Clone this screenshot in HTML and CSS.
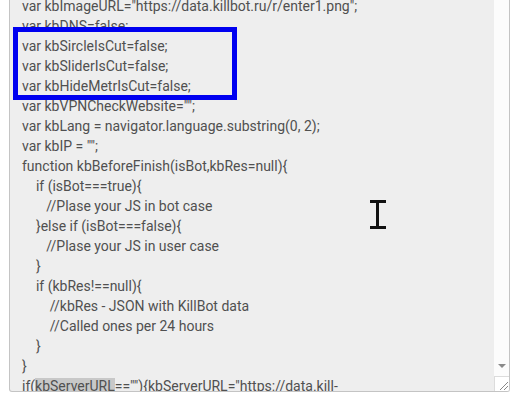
FILE: index.html
```html
<!DOCTYPE html>
<html>
<head>
<meta charset="utf-8">
<link rel="stylesheet" href="styles.css">
</head>
<body>
<div class="page">
  <div class="editor">
    <div class="code">
      <div class="lines">
        <div class="ln">var kbImageURL="https://data.killbot.ru/r/enter1.png";</div>
        <div class="ln">var kbDNS=false;</div>
        <div class="ln">var kbSircleIsCut=false;</div>
        <div class="ln">var kbSliderIsCut=false;</div>
        <div class="ln">var kbHideMetrIsCut=false;</div>
        <div class="ln">var kbVPNCheckWebsite="";</div>
        <div class="ln">var kbLang = navigator.language.substring(0, 2);</div>
        <div class="ln">var kbIP = "";</div>
        <div class="ln">function kbBeforeFinish(isBot,kbRes=null){</div>
        <div class="ln">    if (isBot===true){</div>
        <div class="ln">       //Plase your JS in bot case</div>
        <div class="ln">    }else if (isBot===false){</div>
        <div class="ln">       //Plase your JS in user case</div>
        <div class="ln">    }</div>
        <div class="ln">    if (kbRes!==null){</div>
        <div class="ln">        //kbRes - JSON with KillBot data</div>
        <div class="ln">        //Called ones per 24 hours</div>
        <div class="ln">    }</div>
        <div class="ln">}</div>
        <div class="ln">if(<span class="sel">kbServerURL</span>==""){kbServerURL="https://data.kill-</div>
        <div class="ln">bot.ru/";}</div>
      </div>
    </div>
    <div class="scrollbar">
      <div class="track"></div>
      <div class="arrow"><span class="tri"></span></div>
      <div class="resizer">
        <svg width="14" height="14" viewBox="0 0 14 14"><path d="M13 5 L5 13 M13 9 L9 13" stroke="#888" stroke-width="1" fill="none"/></svg>
      </div>
    </div>
  </div>
  <div class="highlight"></div>
  <svg class="ibeam" width="16" height="29" viewBox="0 0 16 29">
    <rect x="0" y="0" width="16" height="3" fill="#111"/>
    <rect x="6" y="2" width="3" height="25" fill="#111"/>
    <rect x="0" y="26" width="16" height="3" fill="#111"/>
  </svg>
</div>
</body>
</html>
```

FILE: styles.css
```css
html, body {
  margin: 0;
  padding: 0;
  background: #ffffff;
}

.page {
  position: relative;
  height: 401px;
  overflow: hidden;
  padding-left: 9px;
}

.editor {
  display: flex;
  width: 499px;
  height: 391px;
  box-sizing: content-box;
  border: 1px solid #c4c4c4;
  border-top: none;
  border-radius: 0 0 3px 3px;
  background: #eeeeee;
  overflow: hidden;
}

.code {
  flex: 1;
  overflow: hidden;
  padding-left: 12px;
  font-family: Roboto, "Liberation Sans", sans-serif;
  font-size: 14px;
  line-height: 20px;
  color: #505050;
}

.lines {
  margin-top: -4px;
}

.ln {
  white-space: pre;
  height: 20px;
}

.sel {
  background: #c8c8c8;
}

.scrollbar {
  width: 15px;
  display: flex;
  flex-direction: column;
  background: #fcfcfc;
}

.track {
  flex: 1;
}

.arrow {
  height: 17px;
  display: flex;
  align-items: center;
  justify-content: center;
}

.tri {
  width: 0;
  height: 0;
  border-left: 4px solid transparent;
  border-right: 4px solid transparent;
  border-top: 4px solid #8a8a8a;
  margin-top: -4px;
}

.resizer {
  height: 15px;
  box-sizing: border-box;
  border-top: 1px solid #dcdcdc;
  border-left: 1px solid #dcdcdc;
  background: #ffffff;
  display: flex;
  align-items: flex-end;
  justify-content: flex-end;
}

.resizer svg {
  display: block;
}

.highlight {
  position: absolute;
  left: 13px;
  top: 27px;
  width: 224px;
  height: 73px;
  box-sizing: border-box;
  border: 5px solid #0000f0;
  background: linear-gradient(#eeeeee 0, #eeeeee 5px, transparent 5px);
}

.ibeam {
  position: absolute;
  left: 370px;
  top: 200px;
}
```
